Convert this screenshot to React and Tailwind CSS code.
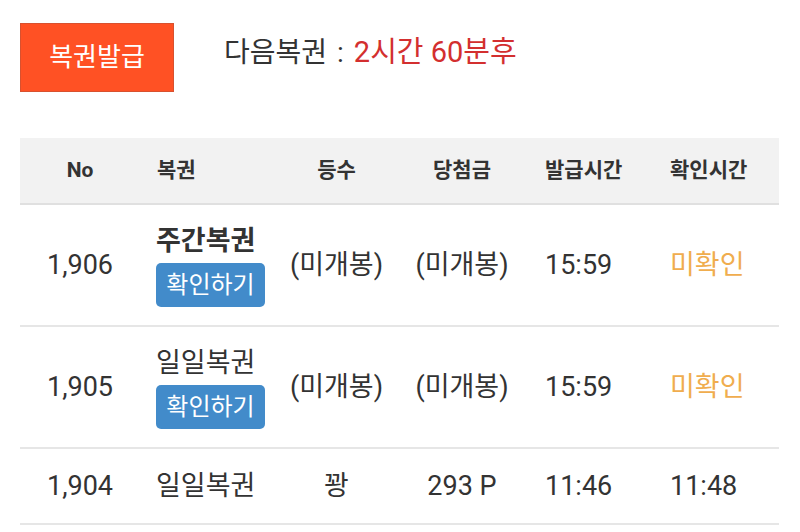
import React from 'react';

const rows = [
  { no: '1,906', name: '주간복권', bold: true, check: true, rank: '(미개봉)', prize: '(미개봉)', issued: '15:59', confirmed: '미확인' },
  { no: '1,905', name: '일일복권', bold: false, check: true, rank: '(미개봉)', prize: '(미개봉)', issued: '15:59', confirmed: '미확인' },
  { no: '1,904', name: '일일복권', bold: false, check: false, rank: '꽝', prize: '293 P', issued: '11:46', confirmed: '11:48' },
];

const cols = 'grid grid-cols-[120px_143px_107px_144px_124px_121px]';

const App = () => {
  return (
    <div className="w-[800px] h-[532px] bg-white overflow-hidden text-[#333]" style={{ fontFamily: 'Roboto, "Noto Sans CJK KR", sans-serif' }}>
      {/* top bar */}
      <div className="flex items-center pt-[23px] pl-[20px]">
        <button className="w-[154px] h-[69px] bg-[#ff5124] border border-[#d8512f] text-white text-[26px]">복권발급</button>
        <div className="ml-[50px] text-[28px] -mt-[10px] flex items-baseline">
          <span>다음복권</span>
          <span className="mx-[10px]">:</span>
          <span className="text-[#d32f2f] text-[29px]">2시간 60분후</span>
        </div>
      </div>

      {/* table */}
      <div className="mx-[20px] mt-[46px] w-[759px]">
        <div className={`${cols} h-[67px] items-center bg-[#f2f2f2] border-b-2 border-[#e0e0e0] text-[21px] font-bold`}>
          <div className="text-center">No</div>
          <div className="pl-[17px]">복권</div>
          <div className="text-center">등수</div>
          <div className="text-center">당첨금</div>
          <div className="pl-[11px]">발급시간</div>
          <div className="pl-[12px]">확인시간</div>
        </div>
        {rows.map(r => (
          <div key={r.no} className={`${cols} items-center border-b-2 border-[#e6e6e6] text-[27px] ${r.check ? 'h-[122px]' : 'h-[76px]'}`}>
            <div className="text-center">{r.no}</div>
            <div className="pl-[16px]">
              <div className={`leading-[36px] ${r.bold ? 'font-bold' : ''}`}>{r.name}</div>
              {r.check && (
                <button className="mt-[4px] w-[109px] h-[44px] rounded-[5px] bg-[#428bca] text-white text-[24px]">확인하기</button>
              )}
            </div>
            <div className="text-center">{r.rank}</div>
            <div className="text-center">{r.prize}</div>
            <div className="pl-[11px]">{r.issued}</div>
            <div className={`pl-[12px] ${r.confirmed === '미확인' ? 'text-[#f0ad4e]' : ''}`}>{r.confirmed}</div>
          </div>
        ))}
      </div>
    </div>
  );
};

export default App;
